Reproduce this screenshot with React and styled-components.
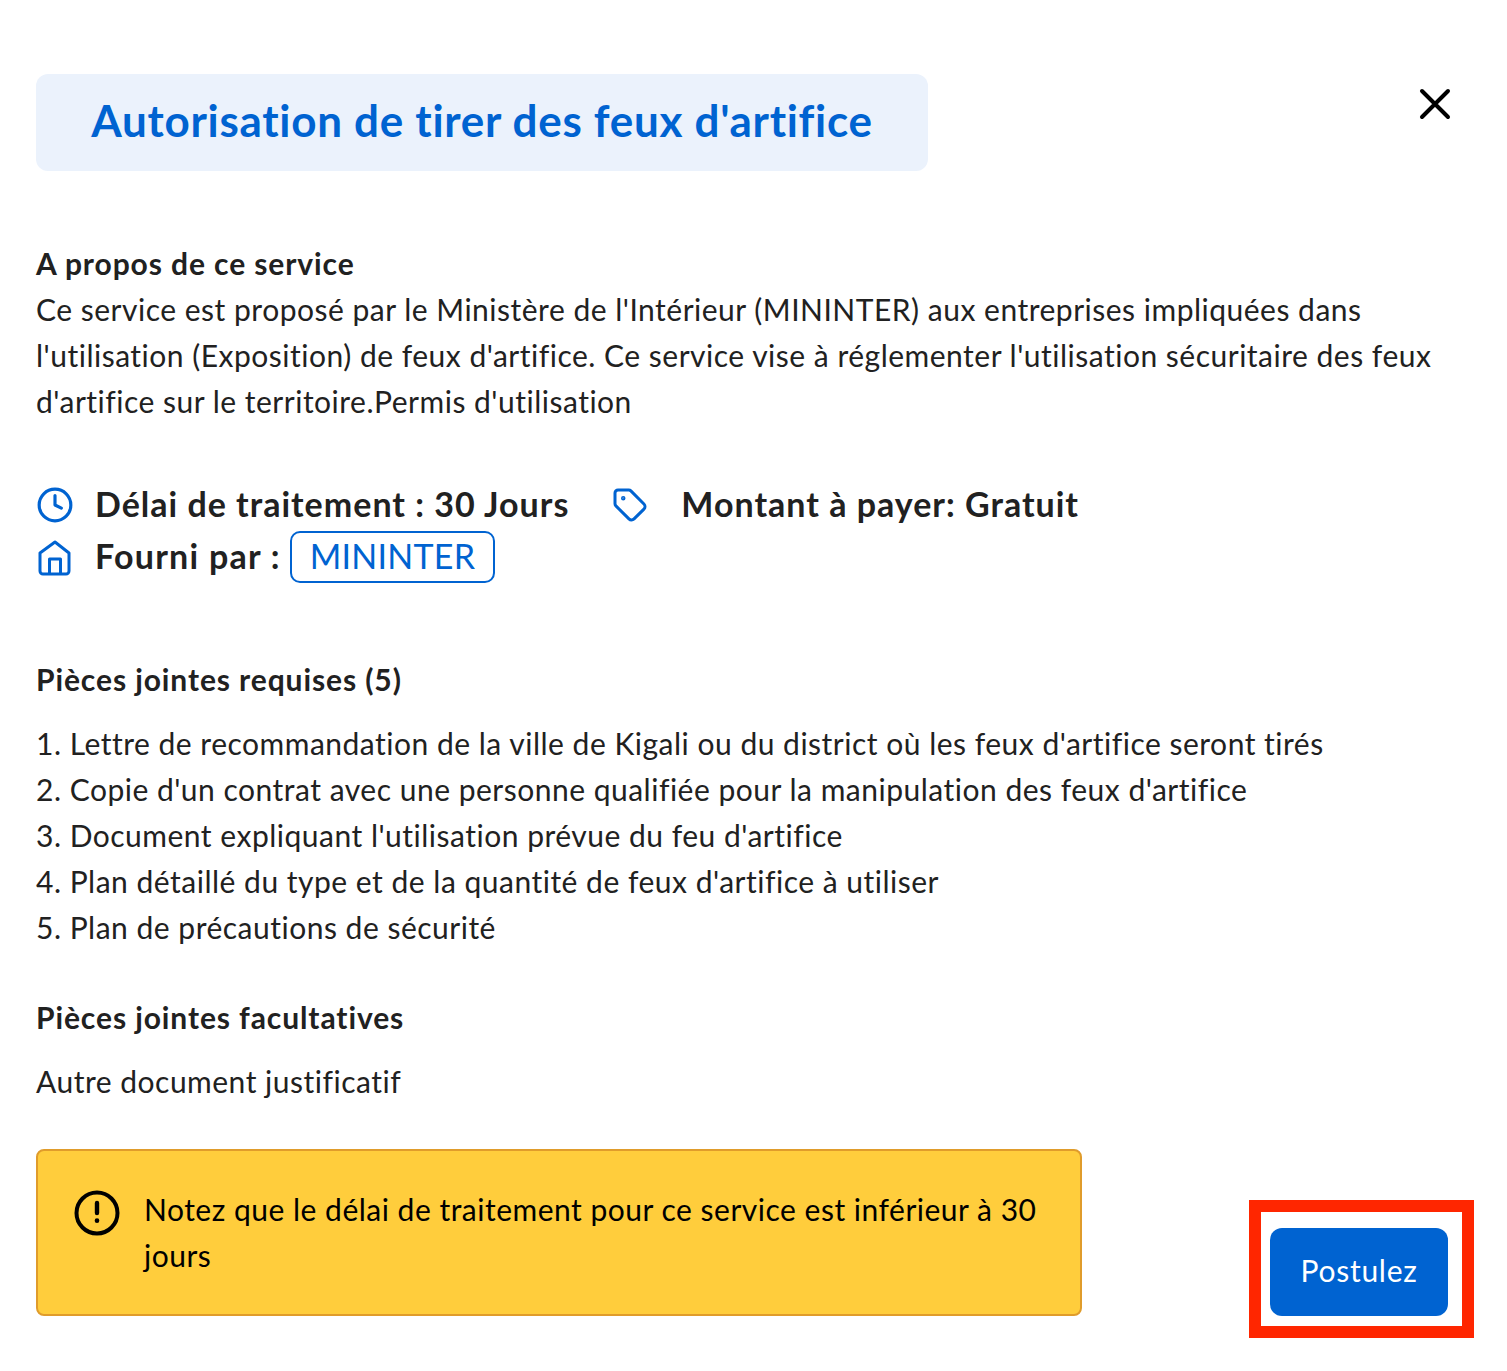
import React from 'react'
import styled, { createGlobalStyle } from 'styled-components'
import { Clock, Tag } from 'lucide-react'

const GlobalStyle = createGlobalStyle`
  body {
    margin: 0;
    background: #ffffff;
    font-family: Lato, "Noto Sans", sans-serif;
    color: #212121;
  }
`

const Page = styled.div`
  width: 1507px;
  height: 1371px;
  box-sizing: border-box;
  padding: 74px 33px 0 36px;
  font-size: 30px;
  line-height: 46px;
  letter-spacing: 0.5px;
`

const Header = styled.header`
  display: flex;
  justify-content: space-between;
  align-items: flex-start;
  margin-bottom: 69px;
`

const Title = styled.h1`
  margin: 0;
  width: 892px;
  height: 97px;
  box-sizing: border-box;
  padding-bottom: 6px;
  display: flex;
  align-items: center;
  justify-content: center;
  border-radius: 12px;
  background: #ebf2fc;
  color: #0063d1;
  font-size: 44px;
  font-weight: 700;
  letter-spacing: 0.7px;
`

const CloseButton = styled.button`
  margin: 14px 23px 0 0;
  padding: 0;
  border: 0;
  background: none;
  display: flex;
`

const CloseIcon = styled.svg`
  width: 32px;
  height: 32px;
`

const Heading = styled.div`
  font-weight: 700;
  letter-spacing: 0.9px;
  margin-bottom: ${p => p.$gap || 0}px;
`

const Paragraph = styled.p`
  margin: 0;
`

const Meta = styled.div`
  margin: 55px 0 73px;
  font-size: 34px;
  font-weight: 700;
  letter-spacing: 1px;
`

const MetaRow = styled.div`
  display: flex;
  align-items: center;
  height: 52px;
`

const MetaIcon = styled.span`
  width: ${p => p.$width || 59}px;
  flex: none;
  display: flex;
  color: #0063d1;
`

const HomeIcon = styled.svg`
  width: 37px;
  height: 38px;
  fill: none;
  stroke: currentColor;
  stroke-width: 3;
  stroke-linejoin: round;
`

const MetaText = styled.span`
  padding-bottom: 2px;
  margin-right: ${p => p.$gap || 0}px;
  letter-spacing: ${p => p.$spacing || 1}px;
`

const Provider = styled.span`
  margin-left: 9px;
  height: 52px;
  box-sizing: border-box;
  padding: 0 18px 2px;
  display: flex;
  align-items: center;
  border: 2px solid #0063d1;
  border-radius: 10px;
  color: #0063d1;
  font-weight: 400;
  letter-spacing: 0.25px;
`

const Section = styled.section`
  margin-bottom: ${p => p.$gap || 44}px;
`

const List = styled.ol`
  margin: 0;
  padding: 0;
  list-style: none;
`

const Footer = styled.div`
  display: flex;
  justify-content: space-between;
  align-items: flex-end;
  padding-right: 26px;
`

const Alert = styled.div`
  width: 1046px;
  height: 167px;
  box-sizing: border-box;
  padding: 35px 30px 0 36px;
  display: flex;
  gap: 24px;
  border: 2px solid #e09c2b;
  border-radius: 8px;
  background: #ffcd3c;
  color: #000000;
`

const AlertIcon = styled.svg`
  flex: none;
  width: 46px;
  height: 46px;
  margin-top: 4px;
`

const ApplyWrap = styled.div`
  position: relative;
`

const ApplyButton = styled.button`
  width: 178px;
  height: 88px;
  padding: 0 0 4px;
  display: block;
  border: 0;
  border-radius: 12px;
  background: #0063d1;
  color: #ffffff;
  font: inherit;
  letter-spacing: 0.75px;
`

const Highlight = styled.div`
  position: absolute;
  left: -21px;
  top: -28px;
  width: 225px;
  height: 138px;
  box-sizing: border-box;
  border: 12px solid #ff2600;
  pointer-events: none;
`

const required = [
  "1. Lettre de recommandation de la ville de Kigali ou du district où les feux d'artifice seront tirés",
  "2. Copie d'un contrat avec une personne qualifiée pour la manipulation des feux d'artifice",
  "3. Document expliquant l'utilisation prévue du feu d'artifice",
  "4. Plan détaillé du type et de la quantité de feux d'artifice à utiliser",
  '5. Plan de précautions de sécurité'
]

const App = () => (
  <Page>
    <GlobalStyle />
    <Header>
      <Title>Autorisation de tirer des feux d'artifice</Title>
      <CloseButton aria-label='Fermer'>
        <CloseIcon viewBox='0 0 32 32' fill='none' stroke='#000000' strokeWidth='4' strokeLinecap='round'>
          <path d='M3 3l26 26M29 3L3 29' />
        </CloseIcon>
      </CloseButton>
    </Header>

    <Heading>A propos de ce service</Heading>
    <Paragraph>
      Ce service est proposé par le Ministère de l'Intérieur (MININTER) aux entreprises impliquées dans
      l'utilisation (Exposition) de feux d'artifice. Ce service vise à réglementer l'utilisation sécuritaire des feux
      d'artifice sur le territoire.Permis d'utilisation
    </Paragraph>

    <Meta>
      <MetaRow>
        <MetaIcon><Clock size={38} strokeWidth={2} /></MetaIcon>
        <MetaText $gap={43}>Délai de traitement : 30 Jours</MetaText>
        <MetaIcon $width={69}><Tag size={36} strokeWidth={2} /></MetaIcon>
        <MetaText>Montant à payer: Gratuit</MetaText>
      </MetaRow>
      <MetaRow>
        <MetaIcon>
          <HomeIcon viewBox='0 0 37 38'>
            <path d='M19 4 L33 15 V33 a3 3 0 0 1 -3 3 H7 a3 3 0 0 1 -3 -3 V15 Z' />
            <path d='M13.5 36 V21 H24.5 V36' />
          </HomeIcon>
        </MetaIcon>
        <MetaText $spacing={1.25}>Fourni par :</MetaText>
        <Provider>MININTER</Provider>
      </MetaRow>
    </Meta>

    <Section>
      <Heading $gap={18}>Pièces jointes requises (5)</Heading>
      <List>
        {required.map(item => <li key={item}>{item}</li>)}
      </List>
    </Section>

    <Section $gap={45}>
      <Heading $gap={18}>Pièces jointes facultatives</Heading>
      <Paragraph>Autre document justificatif</Paragraph>
    </Section>

    <Footer>
      <Alert>
        <AlertIcon viewBox='0 0 46 46' fill='none' stroke='#000000' strokeWidth='4' strokeLinecap='round'>
          <circle cx='23' cy='23' r='20.5' />
          <path d='M23 13v10' strokeWidth='4.4' />
          <path d='M23 30.5v.2' strokeWidth='4.6' />
        </AlertIcon>
        <span>Notez que le délai de traitement pour ce service est inférieur à 30 jours</span>
      </Alert>
      <ApplyWrap>
        <ApplyButton>Postulez</ApplyButton>
        <Highlight />
      </ApplyWrap>
    </Footer>
  </Page>
)

export default App
